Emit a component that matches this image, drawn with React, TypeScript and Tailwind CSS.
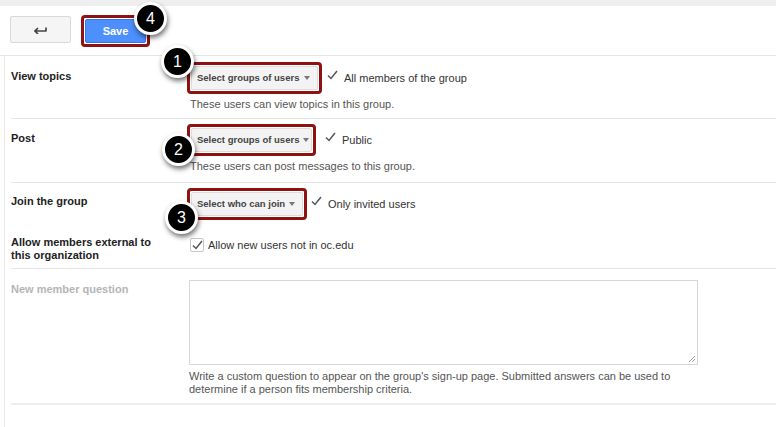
import React from 'react'

const font = { fontFamily: '"Liberation Sans", Arial, sans-serif' }

const Badge = ({ n, className }: { n: number; className: string }) => (
  <div
    className={`absolute z-10 flex h-[33px] w-[33px] items-center justify-center rounded-full border-[3px] border-white bg-black text-[16px] text-white shadow-[1px_3px_5px_rgba(0,0,0,0.55)] ${className}`}
  >
    {n}
  </div>
)

const Check = ({ className = '' }: { className?: string }) => (
  <svg className={className} width="11" height="10" viewBox="0 0 11 10">
    <path d="M1 5.5 L4 8.5 L10 1" fill="none" stroke="#555" strokeWidth="1.5" />
  </svg>
)

const Dropdown = ({ label, width }: { label: string; width: string }) => (
  <div className="rounded-[4px] border-[3px] border-[#8e1212] p-[1px]">
    <div
      className={`flex h-[24px] items-center justify-between whitespace-nowrap rounded-[2px] border border-[#dcdcdc] bg-[#f3f3f3] pl-[5px] pr-[7px] text-[9.5px] font-bold text-[#444] ${width}`}
    >
      <span>{label}</span>
      <span className="ml-1 h-0 w-0 border-x-[3px] border-t-[4px] border-x-transparent border-t-[#777]" />
    </div>
  </div>
)

export default function App() {
  return (
    <div className="relative h-[427px] w-[776px] overflow-hidden bg-white" style={font}>
      <div className="h-[6px] bg-[#efefef]" />
      <div className="flex h-[50px] items-start gap-[10px] border-b border-[#e5e5e5] pl-[10px] pt-[9px]">
        <button className="mt-[1px] flex h-[27px] w-[61px] items-center justify-center rounded-[2px] border border-[#d9d9d9] bg-[#f5f5f5]">
          <svg width="13" height="8" viewBox="0 0 13 8">
            <path d="M1 5 L12 5 M12 5.5 L12 1.5 M4 2 L1 5 L4 8" fill="none" stroke="#444" strokeWidth="1.7" />
          </svg>
        </button>
        <div className="relative rounded-[4px] border-[3px] border-[#8e1212] p-[1px]">
          <div className="flex h-[24px] w-[61px] items-center justify-center rounded-[2px] border border-[#3079ed] bg-[#4d8ffd] text-[11px] font-bold text-white">
            Save
          </div>
          <Badge n={4} className="left-[50px] top-[-16px]" />
        </div>
      </div>

      <div className="ml-[4px] h-full border-l border-[#e8e8e8] pl-[6px]">
        <div className="relative flex h-[63px] border-b border-[#e5e5e5]">
          <div className="w-[176px] pt-[12px] text-[11px] font-bold text-[#222]">View topics</div>
          <div className="pt-[6px]">
            <div className="flex items-center">
              <Dropdown label="Select groups of users" width="w-[127px]" />
              <Check className="ml-[5px] mb-[6px]" />
              <span className="ml-[6px] text-[11px] text-[#333]">All members of the group</span>
            </div>
            <div className="mt-[2px] pl-[3px] text-[11px] text-[#555]">These users can view topics in this group.</div>
          </div>
          <Badge n={1} className="left-[150px] top-[-11px]" />
        </div>

        <div className="relative flex h-[64px] border-b border-[#e5e5e5]">
          <div className="w-[176px] pt-[11px] text-[11px] font-bold text-[#222]">Post</div>
          <div className="pt-[5px]">
            <div className="flex items-center">
              <Dropdown label="Select groups of users" width="w-[121px]" />
              <Check className="ml-[9px] mb-[6px]" />
              <span className="ml-[6px] text-[11px] text-[#333]">Public</span>
            </div>
            <div className="mt-[2px] pl-[3px] text-[11px] text-[#555]">These users can post messages to this group.</div>
          </div>
          <Badge n={2} className="left-[151px] top-[14px]" />
        </div>

        <div className="relative flex h-[53px]">
          <div className="w-[176px] pt-[10px] text-[11px] font-bold text-[#222]">Join the group</div>
          <div className="pt-[5px]">
            <div className="flex items-center">
              <Dropdown label="Select who can join" width="w-[112px]" />
              <Check className="ml-[4px] mb-[6px]" />
              <span className="ml-[6px] text-[11px] text-[#333]">Only invited users</span>
            </div>
          </div>
          <Badge n={3} className="left-[154px] top-[18px]" />
        </div>

        <div className="flex h-[33px] border-b border-[#e5e5e5]">
          <div className="w-[176px] text-[11px] font-bold leading-[13px] text-[#222]">
            Allow members external to
            <br />
            this organization
          </div>
          <div className="flex items-center self-start pl-[3px] pt-[1px]">
            <div className="flex h-[14px] w-[14px] items-center justify-center rounded-[2px] border border-[#c6c6c6] bg-white">
              <Check />
            </div>
            <span className="ml-[4px] text-[11px] text-[#333]">Allow new users not in oc.edu</span>
          </div>
        </div>

        <div className="flex h-[136px] border-b-2 border-[#eeeeee]">
          <div className="w-[176px] pt-[12px] text-[11px] font-bold text-[#b5b5b5]">New member question</div>
          <div className="pl-[2px] pt-[11px]">
            <div className="relative h-[85px] w-[509px] border border-[#d6d6d6] bg-white">
              <svg className="absolute bottom-[2px] right-[2px]" width="7" height="7" viewBox="0 0 7 7">
                <path d="M1 7 L7 1 M4 7 L7 4" stroke="#999" strokeWidth="1" />
              </svg>
            </div>
            <div className="mt-[5px] w-[500px] text-[11px] leading-[13px] text-[#555]">
              Write a custom question to appear on the group's sign-up page. Submitted answers can be used to determine if a person fits membership criteria.
            </div>
          </div>
        </div>
      </div>
    </div>
  )
}
